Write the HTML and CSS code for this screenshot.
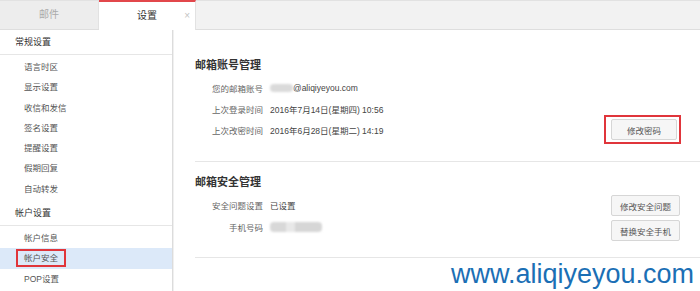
FILE: index.html
```html
<!DOCTYPE html>
<html lang="zh-CN">
<head>
  <meta charset="UTF-8" />
  <title>设置 - 帐户安全</title>
  <link rel="stylesheet" href="styles.css">
</head>
<body>
  <div class="tabs">
    <div class="tab">邮件</div>
    <div class="tab active">设置<span class="tab-close">×</span></div>
  </div>

  <div class="layout">
    <!-- Sidebar -->
    <div class="sidebar">
      <div class="group-title">常规设置</div>
      <ul class="menu">
        <li>语言时区</li>
        <li>显示设置</li>
        <li>收信和发信</li>
        <li>签名设置</li>
        <li>提醒设置</li>
        <li>假期回复</li>
        <li>自动转发</li>
      </ul>
      <div class="group-title">帐户设置</div>
      <ul class="menu">
        <li>帐户信息</li>
        <li class="selected"><span class="mark">帐户安全</span></li>
        <li>POP设置</li>
      </ul>
    </div>

    <!-- Main -->
    <div class="main">
      <div class="section account">
        <h2>邮箱账号管理</h2>
        <div class="row">
          <span class="label">您的邮箱账号</span>
          <span class="value"><span class="blur blur-mail"></span>@aliqiyeyou.com</span>
        </div>
        <div class="row">
          <span class="label">上次登录时间</span>
          <span class="value">2016年7月14日(星期四) 10:56</span>
        </div>
        <div class="row">
          <span class="label">上次改密时间</span>
          <span class="value">2016年6月28日(星期二) 14:19</span>
          <span class="mark-btn"><button class="btn">修改密码</button></span>
        </div>
      </div>

      <div class="section security">
        <h2>邮箱安全管理</h2>
        <div class="split">
          <div class="rows">
            <div class="row">
              <span class="label">安全问题设置</span>
              <span class="value">已设置</span>
            </div>
            <div class="row">
              <span class="label">手机号码</span>
              <span class="value"><span class="blur blur-phone"></span></span>
            </div>
          </div>
          <div class="btn-col">
            <button class="btn wide">修改安全问题</button>
            <button class="btn wide">替换安全手机</button>
          </div>
        </div>
      </div>

      <div class="watermark">www.aliqiyeyou.com</div>
    </div>
  </div>
</body>
</html>
```

FILE: styles.css
```css
body {
  margin: 0;
  width: 700px;
  height: 291px;
  overflow: hidden;
  background: #fff;
  font-family: "Liberation Sans", "Noto Sans CJK SC", sans-serif;
  color: #444;
}
ul {
  list-style: none;
  margin: 0;
  padding: 0;
}

/* Tabs */
.tabs {
  display: flex;
  height: 28px;
  background: #f2f2f2;
  border-top: 1px solid #e2e2e2;
  border-bottom: 1px solid #dedede;
}
.tab {
  width: 98px;
  line-height: 28px;
  text-align: center;
  font-size: 10px;
  color: #aaa;
  background: #ededed;
  border-right: 1px solid #e2e2e2;
}
.tab.active {
  position: relative;
  width: 96px;
  background: #fff;
  color: #333;
  border-top: 2px solid #e2474b;
  margin-top: -1px;
  line-height: 27px;
  margin-bottom: -1px;
  height: 28px;
}
.tab-close {
  position: absolute;
  right: 5px;
  top: 0;
  font-size: 10px;
  color: #c4c4c4;
}

/* Layout */
.layout {
  display: flex;
  height: 262px;
}
.sidebar {
  width: 172px;
  flex-shrink: 0;
  border-right: 1px solid #dcdcdc;
  box-shadow: 1px 0 0 #f0f0f0;
  font-size: 8.5px;
}
.group-title {
  height: 24px;
  line-height: 24px;
  padding-left: 15px;
  color: #333;
  font-size: 9px;
  border-bottom: 1px solid #e6e6e6;
}
.menu {
  padding: 2px 0;
}
.menu li {
  height: 20.3px;
  line-height: 20.3px;
  padding-left: 24px;
  color: #555;
}
.menu li.selected {
  background: #dce9f9;
}
.mark {
  display: inline-block;
  line-height: 14px;
  margin-left: -8px;
  padding: 0 6px;
  border: 2px solid #e0353b;
}

/* Main */
.main {
  flex: 1;
  padding-left: 22px;
}
.section {
  border-bottom: 1px solid #e6e6e6;
  padding-right: 19px;
}
.section.account {
  padding-bottom: 21px;
}
.section.security {
  padding-bottom: 16px;
}
.section h2 {
  margin: 0;
  padding-top: 27px;
  line-height: 16px;
  height: 16px;
  font-size: 11px;
  font-weight: bold;
  color: #333;
}
.section.security h2 {
  padding-top: 12px;
}
.row {
  display: flex;
  align-items: center;
  height: 21px;
  font-size: 8.5px;
}
.section h2 + .row {
  margin-top: 4px;
}
.label {
  width: 68px;
  text-align: right;
  color: #666;
}
.value {
  margin-left: 7px;
  color: #444;
  display: flex;
  align-items: center;
}
.blur {
  display: inline-block;
  background: #dadada;
  border-radius: 4px;
  filter: blur(1px);
}
.blur-mail {
  width: 23px;
  height: 8px;
}
.blur-phone {
  width: 52px;
  height: 10px;
  background: linear-gradient(90deg, #d8d8d8 0 30%, #e8e8e8 30% 48%, #d6d6d6 48% 100%);
}

.mark-btn {
  margin-left: auto;
  margin-top: -4px;
  margin-bottom: -4px;
  padding: 2px 2px 2px 5px;
  border: 2px solid #e0353b;
  display: flex;
}
.btn {
  width: 66px;
  height: 21px;
  padding: 0;
  font-family: inherit;
  font-size: 8.5px;
  color: #555;
  background: #f6f6f6;
  border: 1px solid #d6d6d6;
  border-radius: 2px;
}
.btn.wide {
  width: 69px;
}

.split {
  display: flex;
  justify-content: space-between;
}
.rows {
  padding-top: 4px;
}
.split .row {
  height: 22px;
}
.btn-col {
  display: flex;
  flex-direction: column;
  gap: 4px;
  margin-top: 5px;
  margin-right: 1px;
}

.watermark {
  text-align: right;
  padding-right: 6px;
  margin-top: 1px;
  font-size: 27px;
  line-height: 31px;
  color: #1b6fb5;
}
```
